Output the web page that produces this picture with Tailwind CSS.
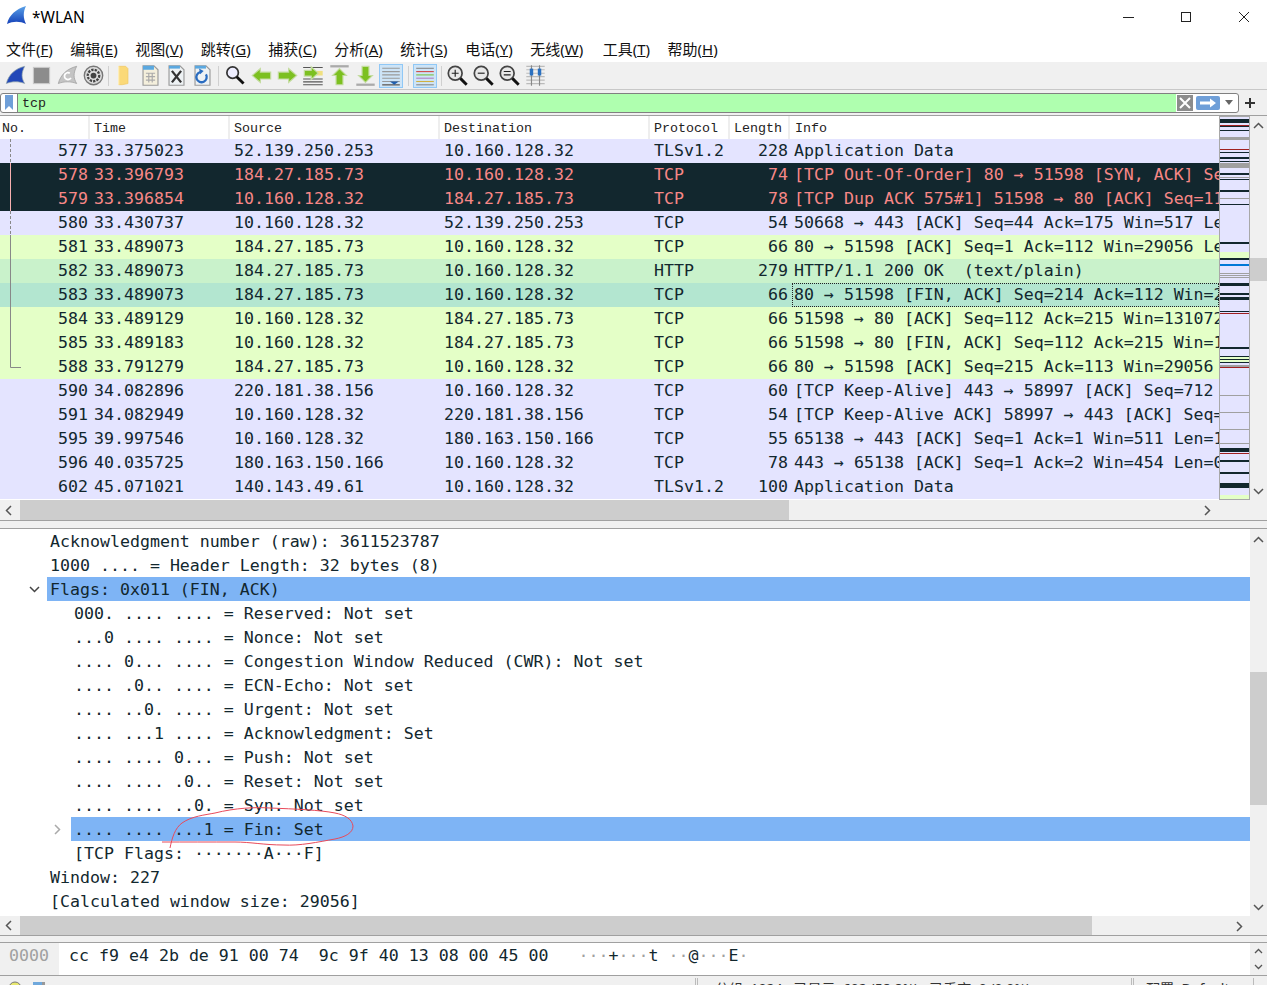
<!DOCTYPE html>
<html lang="zh-CN">
<head>
<meta charset="UTF-8">
<title>*WLAN</title>
<script src="https://cdn.jsdelivr.net/npm/@tailwindcss/browser@4"></script>
</head>
<body class="bg-[#f0f0f0] overflow-hidden">
<div class="relative w-[1267px] h-[985px] overflow-hidden flex flex-col text-black font-['Noto_Sans','Noto_Sans_CJK_SC',sans-serif]">

  <!-- title bar -->
  <div class="h-[34px] bg-white flex items-center pl-[6px]">
    <svg width="22" height="22" viewBox="0 0 22 22" class="mt-[-2px]">
      <defs><linearGradient id="fin" x1="0" y1="0" x2="0" y2="1"><stop offset="0" stop-color="#5aa2e8"/><stop offset="1" stop-color="#1440b8"/></linearGradient></defs>
      <path d="M1 19C3 10 10 4 20 1C17 7 17 13 20 19C14 16 7 16 1 19Z" fill="url(#fin)"/>
    </svg>
    <span class="ml-[4px] mt-[2px] text-[15.5px]">*WLAN</span>
    <div class="ml-auto flex items-center">
      <svg width="58" height="34" viewBox="0 0 58 34"><path d="M30 17.500H41" stroke="#222"/></svg>
      <svg width="58" height="34" viewBox="0 0 58 34"><rect x="30.500" y="12.500" width="9" height="9" fill="none" stroke="#222"/></svg>
      <svg width="58" height="34" viewBox="0 0 58 34"><path d="M30 12L40 22M40 12L30 22" stroke="#222"/></svg>
    </div>
  </div>

  <!-- menu -->
  <div class="h-[28px] bg-white flex items-center pl-[6px] pt-[2px] text-[15px] gap-[17.5px] text-[#111]">
    <span>文件(<u>F</u>)</span><span>编辑(<u>E</u>)</span><span>视图(<u>V</u>)</span><span>跳转(<u>G</u>)</span><span>捕获(<u>C</u>)</span><span>分析(<u>A</u>)</span><span>统计(<u>S</u>)</span><span>电话(<u>Y</u>)</span><span>无线(<u>W</u>)</span><span class="ml-[2px]">工具(<u>T</u>)</span><span>帮助(<u>H</u>)</span>
  </div>

  <!-- toolbar -->
  <div class="h-[28px] bg-[#f0f0f0] border-b border-[#c8c8c8] flex items-center pl-[2px]">
    <span class="w-[26px] h-[24px] flex items-center justify-center"><svg width="23" height="23" viewBox="0 0 20 20"><path d="M2 17C4 9 10 4 18 2C15 8 15 12 18 17C13 15 7 15 2 17Z" fill="#2248b8" stroke="#9aa" stroke-width=".6"/></svg></span>
    <span class="w-[26px] h-[24px] flex items-center justify-center"><svg width="23" height="23" viewBox="0 0 20 20"><rect x="3" y="3" width="14" height="14" fill="#8c8c8c" stroke="#c8c8c8"/></svg></span>
    <span class="w-[26px] h-[24px] flex items-center justify-center"><svg width="23" height="23" viewBox="0 0 20 20"><path d="M2 17C4 9 10 4 18 2C15 8 15 12 18 17C13 15 7 15 2 17Z" fill="#c4c4c4" stroke="#999" stroke-width=".6"/><path d="M12 8A3 3 0 1 0 13 12" fill="none" stroke="#fff" stroke-width="1.500"/></svg></span>
    <span class="w-[26px] h-[24px] flex items-center justify-center"><svg width="23" height="23" viewBox="0 0 20 20"><circle cx="10" cy="10" r="8" fill="#ddd" stroke="#777" stroke-width="1.200"/><circle cx="10" cy="10" r="5" fill="none" stroke="#444" stroke-width="2" stroke-dasharray="2 1"/><circle cx="10" cy="10" r="2.500" fill="#444"/></svg></span>
    <span class="w-px h-[20px] bg-[#d0d0d0] mx-[2px]"></span>
    <span class="w-[26px] h-[24px] flex items-center justify-center"><svg width="23" height="23" viewBox="0 0 20 20"><path d="M5 2H11L13 4V17L8 18H5Z" fill="#fbd978" stroke="#f0c860" stroke-width=".6"/><path d="M5 2V18" stroke="#fff2c0"/></svg></span>
    <span class="w-[26px] h-[24px] flex items-center justify-center"><svg width="23" height="23" viewBox="0 0 20 20"><path d="M3.500 1.500H13L16.500 5V18.500H3.500Z" fill="#f4efdc" stroke="#9a9a9a"/><path d="M3.500 1.500H13V5H3.500Z" fill="#5aa8e0"/><path d="M6 8H14M6 11H14M6 14H14M8.500 8V16M11.500 8V16" stroke="#aaa"/></svg></span>
    <span class="w-[26px] h-[24px] flex items-center justify-center"><svg width="23" height="23" viewBox="0 0 20 20"><path d="M3.500 1.500H13L16.500 5V18.500H3.500Z" fill="#eef2f4" stroke="#9a9a9a"/><path d="M3.500 1.500H13V4H3.500Z" fill="#5aa8e0"/><path d="M6 6L14 16M14 6L6 16" stroke="#333" stroke-width="2"/></svg></span>
    <span class="w-[26px] h-[24px] flex items-center justify-center"><svg width="23" height="23" viewBox="0 0 20 20"><path d="M3.500 1.500H13L16.500 5V18.500H3.500Z" fill="#eef2f4" stroke="#9a9a9a"/><path d="M3.500 1.500H13V4H3.500Z" fill="#5aa8e0"/><path d="M8 7A4.500 4.500 0 1 0 13 9" fill="none" stroke="#2a6cc0" stroke-width="2"/><path d="M7 4L11 6L8 9Z" fill="#2a6cc0"/></svg></span>
    <span class="w-px h-[20px] bg-[#d0d0d0] mx-[3px]"></span>
    <span class="w-[26px] h-[24px] flex items-center justify-center"><svg width="23" height="23" viewBox="0 0 20 20"><circle cx="7.500" cy="7.500" r="5" fill="#eef" stroke="#333" stroke-width="1.500"/><path d="M11 11L17 17" stroke="#111" stroke-width="2.500"/></svg></span>
    <span class="w-[26px] h-[24px] flex items-center justify-center"><svg width="23" height="23" viewBox="0 0 20 20"><path d="M2 10L9 4V7H18V13H9V16Z" fill="#7cc020" stroke="#c4dca0"/></svg></span>
    <span class="w-[26px] h-[24px] flex items-center justify-center"><svg width="23" height="23" viewBox="0 0 20 20"><path d="M18 10L11 4V7H2V13H11V16Z" fill="#7cc020" stroke="#c4dca0"/></svg></span>
    <span class="w-[26px] h-[24px] flex items-center justify-center"><svg width="23" height="23" viewBox="0 0 20 20"><path d="M1 3H18M1 13H18M1 15.500H18M1 18H18" stroke="#555"/><rect x="10" y="6" width="8" height="4" fill="#f0e080"/><path d="M14 8L8 2.500V5.500H2V10.500H8V13.500Z" fill="#7cc020" stroke="#c4dca0"/></svg></span>
    <span class="w-[26px] h-[24px] flex items-center justify-center"><svg width="23" height="23" viewBox="0 0 20 20"><path d="M2 2H18" stroke="#aaa" stroke-width="2"/><path d="M10 4L16 10H13V18H7V10H4Z" fill="#7cc020" stroke="#c4dca0"/></svg></span>
    <span class="w-[26px] h-[24px] flex items-center justify-center"><svg width="23" height="23" viewBox="0 0 20 20"><path d="M2 18H18" stroke="#aaa" stroke-width="2"/><path d="M10 16L16 10H13V2H7V10H4Z" fill="#7cc020" stroke="#c4dca0"/></svg></span>
    <span class="w-[24px] h-[24px] flex items-center justify-center bg-[#cde4f7] border border-[#90c8f6] mx-[1px]"><svg width="22" height="22" viewBox="0 0 20 20"><path d="M2 3H18M2 6H18M2 9H18M2 12H18M2 15H18" stroke="#999"/><path d="M2 18H18" stroke="#777" stroke-width="1.500"/><path d="M9 15H17L13 18Z" fill="#1f5fb0"/></svg></span>
    <span class="w-px h-[20px] bg-[#d0d0d0] mx-[3.500px]"></span>
    <span class="w-[24px] h-[24px] flex items-center justify-center bg-[#cde4f7] border border-[#90c8f6] mx-[1px]"><svg width="22" height="22" viewBox="0 0 20 20"><path d="M2 3H18" stroke="#888"/><path d="M2 6H18" stroke="#d04848"/><path d="M2 9H18" stroke="#7cc040"/><path d="M2 12H18" stroke="#b080c0"/><path d="M2 15H18" stroke="#d0b040"/><path d="M2 18H18" stroke="#888"/></svg></span>
    <span class="w-px h-[20px] bg-[#d0d0d0] mx-[2.500px]"></span>
    <span class="w-[26px] h-[24px] flex items-center justify-center"><svg width="23" height="23" viewBox="0 0 20 20"><circle cx="8" cy="8" r="6" fill="#e8e8e8" stroke="#444" stroke-width="1.500"/><path d="M12.500 12.500L18 18" stroke="#111" stroke-width="2.500"/><path d="M5 8H11M8 5V11" stroke="#222"/></svg></span>
    <span class="w-[26px] h-[24px] flex items-center justify-center"><svg width="23" height="23" viewBox="0 0 20 20"><circle cx="8" cy="8" r="6" fill="#e8e8e8" stroke="#444" stroke-width="1.500"/><path d="M12.500 12.500L18 18" stroke="#111" stroke-width="2.500"/><path d="M5 8H11" stroke="#222"/></svg></span>
    <span class="w-[26px] h-[24px] flex items-center justify-center"><svg width="23" height="23" viewBox="0 0 20 20"><circle cx="8" cy="8" r="6" fill="#e8e8e8" stroke="#444" stroke-width="1.500"/><path d="M12.500 12.500L18 18" stroke="#111" stroke-width="2.500"/><path d="M5 6.500H11M5 9.500H11" stroke="#222"/></svg></span>
    <span class="w-[26px] h-[24px] flex items-center justify-center"><svg width="23" height="23" viewBox="0 0 20 20"><path d="M2 2H18M2 5H18M2 8H18M2 11H18M2 14H18M2 17H18" stroke="#bbb"/><path d="M6.500 1V19M13.500 1V19" stroke="#888"/><rect x="5" y="4" width="3" height="6" fill="#2a70c0"/><rect x="12" y="4" width="3" height="6" fill="#2a70c0"/></svg></span>
  </div>

  <!-- display filter -->
  <div class="h-[26px] flex items-center border-b border-[#a0a0a0] bg-[#f0f0f0]">
    <div class="w-[1239px] h-[20px] flex items-center border border-[#808080] rounded-[3px] bg-white overflow-hidden">
      <span class="w-[17px] h-full flex items-center justify-center border-r border-[#808080]"><svg width="10" height="15" viewBox="0 0 10 15"><path d="M1 0H9V15L5 11L1 15Z" fill="#6f9fd8"/></svg></span>
      <div class="flex-1 h-full bg-[#afffaf] pl-[4px] pt-[2px] flex items-center font-['Liberation_Mono',monospace] text-[13.33px] text-[#222]">tcp</div>
      <span class="w-[16px] h-[16px] bg-[#8c8c8c] flex items-center justify-center ml-[1px]"><svg width="12" height="12" viewBox="0 0 12 12"><path d="M1 1L11 11M11 1L1 11" stroke="#fff" stroke-width="2"/></svg></span>
      <span class="w-[24px] h-[14px] bg-[#6f9fd8] rounded-[2px] flex items-center justify-center ml-[3px]"><svg width="18" height="10" viewBox="0 0 18 10"><path d="M1 3.500H11V0.500L17 5L11 9.500V6.500H1Z" fill="#fff"/></svg></span>
      <span class="w-[18px] flex justify-center"><svg width="8" height="5" viewBox="0 0 8 5"><path d="M0 0H8L4 5Z" fill="#666"/></svg></span>
    </div>
    <span class="w-[21px] flex justify-center"><svg width="10" height="10" viewBox="0 0 10 10"><path d="M5 0V10M0 5H10" stroke="#333" stroke-width="2"/></svg></span>
  </div>

  <!-- packet list -->
  <div class="flex h-[384px] bg-white">
    <div class="w-[1219px] overflow-hidden relative">
      <div class="h-[23px] flex items-center font-['Liberation_Mono',monospace] text-[13.33px] text-[#222] bg-white [&>span]:pt-[2px]">
        <span class="w-[90px] pl-[2px] h-full flex items-center border-r-2 border-[#eeeeee]">No.</span>
        <span class="w-[140px] pl-[4px] h-full flex items-center border-r-2 border-[#eeeeee]">Time</span>
        <span class="w-[210px] pl-[4px] h-full flex items-center border-r-2 border-[#eeeeee]">Source</span>
        <span class="w-[210px] pl-[4px] h-full flex items-center border-r-2 border-[#eeeeee]">Destination</span>
        <span class="w-[80px] pl-[4px] h-full flex items-center border-r-2 border-[#eeeeee]">Protocol</span>
        <span class="w-[60px] pl-[4px] h-full flex items-center border-r-2 border-[#eeeeee]">Length</span>
        <span class="pl-[5px] h-full flex items-center">Info</span>
      </div>
      <div class="font-['DejaVu_Sans_Mono',monospace] text-[16.6px] *:whitespace-pre [&_span]:shrink-0">
        <div class="h-6 flex items-center bg-[#e4e4ff] text-[#12272e]"><span class="w-[88px] text-right">577</span><span class="w-[142px] pl-[6px]">33.375023</span><span class="w-[210px] pl-[4px]">52.139.250.253</span><span class="w-[210px] pl-[4px]">10.160.128.32</span><span class="w-[80px] pl-[4px]">TLSv1.2</span><span class="w-[58px] text-right">228</span><span class="pl-[6px]">Application Data</span></div>
        <div class="h-6 flex items-center bg-[#12272e] text-[#f78787]"><span class="w-[88px] text-right">578</span><span class="w-[142px] pl-[6px]">33.396793</span><span class="w-[210px] pl-[4px]">184.27.185.73</span><span class="w-[210px] pl-[4px]">10.160.128.32</span><span class="w-[80px] pl-[4px]">TCP</span><span class="w-[58px] text-right">74</span><span class="pl-[6px]">[TCP Out-Of-Order] 80 → 51598 [SYN, ACK] Seq=0 Ack=1</span></div>
        <div class="h-6 flex items-center bg-[#12272e] text-[#f78787]"><span class="w-[88px] text-right">579</span><span class="w-[142px] pl-[6px]">33.396854</span><span class="w-[210px] pl-[4px]">10.160.128.32</span><span class="w-[210px] pl-[4px]">184.27.185.73</span><span class="w-[80px] pl-[4px]">TCP</span><span class="w-[58px] text-right">78</span><span class="pl-[6px]">[TCP Dup ACK 575#1] 51598 → 80 [ACK] Seq=112 Ack=1</span></div>
        <div class="h-6 flex items-center bg-[#e4e4ff] text-[#12272e]"><span class="w-[88px] text-right">580</span><span class="w-[142px] pl-[6px]">33.430737</span><span class="w-[210px] pl-[4px]">10.160.128.32</span><span class="w-[210px] pl-[4px]">52.139.250.253</span><span class="w-[80px] pl-[4px]">TCP</span><span class="w-[58px] text-right">54</span><span class="pl-[6px]">50668 → 443 [ACK] Seq=44 Ack=175 Win=517 Len=0</span></div>
        <div class="h-6 flex items-center bg-[#e4ffc7] text-[#12272e]"><span class="w-[88px] text-right">581</span><span class="w-[142px] pl-[6px]">33.489073</span><span class="w-[210px] pl-[4px]">184.27.185.73</span><span class="w-[210px] pl-[4px]">10.160.128.32</span><span class="w-[80px] pl-[4px]">TCP</span><span class="w-[58px] text-right">66</span><span class="pl-[6px]">80 → 51598 [ACK] Seq=1 Ack=112 Win=29056 Len=0</span></div>
        <div class="h-6 flex items-center bg-[#c9f2cb] text-[#12272e]"><span class="w-[88px] text-right">582</span><span class="w-[142px] pl-[6px]">33.489073</span><span class="w-[210px] pl-[4px]">184.27.185.73</span><span class="w-[210px] pl-[4px]">10.160.128.32</span><span class="w-[80px] pl-[4px]">HTTP</span><span class="w-[58px] text-right">279</span><span class="pl-[6px]">HTTP/1.1 200 OK  (text/plain)</span></div>
        <div class="h-6 flex items-center bg-[#b3e6d0] text-[#12272e] relative"><span class="w-[88px] text-right">583</span><span class="w-[142px] pl-[6px]">33.489073</span><span class="w-[210px] pl-[4px]">184.27.185.73</span><span class="w-[210px] pl-[4px]">10.160.128.32</span><span class="w-[80px] pl-[4px]">TCP</span><span class="w-[58px] text-right">66</span><span class="pl-[6px]">80 → 51598 [FIN, ACK] Seq=214 Ack=112 Win=29056 Len=0</span><span class="absolute left-[792px] right-0 top-0 bottom-0 border border-dotted border-[#222]"></span></div>
        <div class="h-6 flex items-center bg-[#e4ffc7] text-[#12272e]"><span class="w-[88px] text-right">584</span><span class="w-[142px] pl-[6px]">33.489129</span><span class="w-[210px] pl-[4px]">10.160.128.32</span><span class="w-[210px] pl-[4px]">184.27.185.73</span><span class="w-[80px] pl-[4px]">TCP</span><span class="w-[58px] text-right">66</span><span class="pl-[6px]">51598 → 80 [ACK] Seq=112 Ack=215 Win=131072 Len=0</span></div>
        <div class="h-6 flex items-center bg-[#e4ffc7] text-[#12272e]"><span class="w-[88px] text-right">585</span><span class="w-[142px] pl-[6px]">33.489183</span><span class="w-[210px] pl-[4px]">10.160.128.32</span><span class="w-[210px] pl-[4px]">184.27.185.73</span><span class="w-[80px] pl-[4px]">TCP</span><span class="w-[58px] text-right">66</span><span class="pl-[6px]">51598 → 80 [FIN, ACK] Seq=112 Ack=215 Win=131072 Len=0</span></div>
        <div class="h-6 flex items-center bg-[#e4ffc7] text-[#12272e]"><span class="w-[88px] text-right">588</span><span class="w-[142px] pl-[6px]">33.791279</span><span class="w-[210px] pl-[4px]">184.27.185.73</span><span class="w-[210px] pl-[4px]">10.160.128.32</span><span class="w-[80px] pl-[4px]">TCP</span><span class="w-[58px] text-right">66</span><span class="pl-[6px]">80 → 51598 [ACK] Seq=215 Ack=113 Win=29056 Len=0</span></div>
        <div class="h-6 flex items-center bg-[#e4e4ff] text-[#12272e]"><span class="w-[88px] text-right">590</span><span class="w-[142px] pl-[6px]">34.082896</span><span class="w-[210px] pl-[4px]">220.181.38.156</span><span class="w-[210px] pl-[4px]">10.160.128.32</span><span class="w-[80px] pl-[4px]">TCP</span><span class="w-[58px] text-right">60</span><span class="pl-[6px]">[TCP Keep-Alive] 443 → 58997 [ACK] Seq=712 Ack=1</span></div>
        <div class="h-6 flex items-center bg-[#e4e4ff] text-[#12272e]"><span class="w-[88px] text-right">591</span><span class="w-[142px] pl-[6px]">34.082949</span><span class="w-[210px] pl-[4px]">10.160.128.32</span><span class="w-[210px] pl-[4px]">220.181.38.156</span><span class="w-[80px] pl-[4px]">TCP</span><span class="w-[58px] text-right">54</span><span class="pl-[6px]">[TCP Keep-Alive ACK] 58997 → 443 [ACK] Seq=1 Ack=713</span></div>
        <div class="h-6 flex items-center bg-[#e4e4ff] text-[#12272e]"><span class="w-[88px] text-right">595</span><span class="w-[142px] pl-[6px]">39.997546</span><span class="w-[210px] pl-[4px]">10.160.128.32</span><span class="w-[210px] pl-[4px]">180.163.150.166</span><span class="w-[80px] pl-[4px]">TCP</span><span class="w-[58px] text-right">55</span><span class="pl-[6px]">65138 → 443 [ACK] Seq=1 Ack=1 Win=511 Len=1</span></div>
        <div class="h-6 flex items-center bg-[#e4e4ff] text-[#12272e]"><span class="w-[88px] text-right">596</span><span class="w-[142px] pl-[6px]">40.035725</span><span class="w-[210px] pl-[4px]">180.163.150.166</span><span class="w-[210px] pl-[4px]">10.160.128.32</span><span class="w-[80px] pl-[4px]">TCP</span><span class="w-[58px] text-right">78</span><span class="pl-[6px]">443 → 65138 [ACK] Seq=1 Ack=2 Win=454 Len=0</span></div>
        <div class="h-6 flex items-center bg-[#e4e4ff] text-[#12272e]"><span class="w-[88px] text-right">602</span><span class="w-[142px] pl-[6px]">45.071021</span><span class="w-[210px] pl-[4px]">140.143.49.61</span><span class="w-[210px] pl-[4px]">10.160.128.32</span><span class="w-[80px] pl-[4px]">TLSv1.2</span><span class="w-[58px] text-right">100</span><span class="pl-[6px]">Application Data</span></div>
      </div>
      <!-- conversation tree marks -->
      <svg class="absolute left-0 top-[23px]" width="24" height="240" viewBox="0 0 24 240">
        <path d="M10.500 0V24" stroke="#888" stroke-dasharray="3 2"/>
        <path d="M10.500 24V72" stroke="#f7b0b0"/>
        <path d="M10.500 72V96" stroke="#888" stroke-dasharray="3 2"/>
        <path d="M10.500 96V228.500H21" stroke="#888" fill="none"/>
      </svg>
    </div>
    <!-- packet minimap -->
    <svg class="shrink-0" width="31" height="384" viewBox="0 0 31 384">
      <rect x=".5" y=".5" width="30" height="383" fill="#e4e4ff" stroke="#a8a8a8"/>
      <g fill="#12272e">
        <rect x="1" y="3" width="29" height="4"/><rect x="1" y="10" width="29" height="1"/><rect x="1" y="14" width="29" height="1"/><rect x="1" y="36" width="29" height="1"/><rect x="1" y="41" width="29" height="2"/><rect x="1" y="45" width="29" height="1"/><rect x="1" y="57" width="29" height="2"/><rect x="1" y="63" width="29" height="1"/><rect x="1" y="74" width="29" height="2"/><rect x="1" y="88" width="29" height="1"/><rect x="1" y="126" width="29" height="2"/><rect x="1" y="142" width="29" height="2"/><rect x="1" y="167" width="29" height="3"/><rect x="1" y="177" width="29" height="2"/><rect x="1" y="181" width="29" height="3"/><rect x="1" y="195" width="29" height="1"/><rect x="1" y="231" width="29" height="2"/><rect x="1" y="240" width="29" height="1"/><rect x="1" y="243" width="29" height="1"/><rect x="1" y="246" width="29" height="1"/><rect x="1" y="332" width="29" height="4"/><rect x="1" y="344" width="29" height="2"/><rect x="1" y="356" width="29" height="2"/><rect x="1" y="367" width="29" height="5"/>
      </g>
      <g fill="#a0a0a0">
        <rect x="1" y="21" width="29" height="3"/><rect x="1" y="47" width="29" height="5"/><rect x="1" y="61" width="29" height="1"/><rect x="1" y="82" width="29" height="1"/><rect x="1" y="157" width="29" height="1"/><rect x="1" y="159" width="29" height="1"/><rect x="1" y="161" width="29" height="1"/><rect x="1" y="249" width="29" height="2"/><rect x="1" y="279" width="29" height="1"/><rect x="1" y="296" width="29" height="1"/><rect x="1" y="313" width="29" height="1"/><rect x="1" y="327" width="29" height="1"/>
      </g>
      <g fill="#a02020">
        <rect x="1" y="9" width="29" height="1"/><rect x="1" y="33" width="29" height="1"/><rect x="1" y="197" width="29" height="1"/><rect x="1" y="251" width="29" height="1"/><rect x="1" y="337" width="29" height="1"/>
      </g>
      <g fill="#e4ffc7">
        <rect x="1" y="136" width="29" height="6"/><rect x="1" y="241" width="29" height="2"/><rect x="1" y="244" width="29" height="2"/><rect x="1" y="379" width="29" height="4"/>
      </g>
      <rect x="1" y="148" width="29" height="2" fill="#0078d7"/>
    </svg>
    <!-- list v-scroll -->
    <div class="w-[17px] bg-[#f0f0f0] flex flex-col items-center relative">
      <svg class="mt-[6px]" width="11" height="7" viewBox="0 0 11 7"><path d="M1 6L5.500 1.500L10 6" fill="none" stroke="#555" stroke-width="1.500"/></svg>
      <div class="absolute left-0 right-0 top-[142px] h-[23px] bg-[#cdcdcd]"></div>
      <svg class="mt-auto mb-[5px]" width="11" height="7" viewBox="0 0 11 7"><path d="M1 1L5.500 5.500L10 1" fill="none" stroke="#555" stroke-width="1.500"/></svg>
    </div>
  </div>
  <!-- list h-scroll -->
  <div class="h-[20px] bg-[#f0f0f0] flex items-center relative">
    <svg class="ml-[5px]" width="7" height="11" viewBox="0 0 7 11"><path d="M6 1L1.500 5.500L6 10" fill="none" stroke="#555" stroke-width="1.500"/></svg>
    <div class="absolute left-[20px] top-0 bottom-0 w-[769px] bg-[#cdcdcd]"></div>
    <svg class="absolute left-[1204px] top-[5px]" width="7" height="11" viewBox="0 0 7 11"><path d="M1 1L5.500 5.500L1 10" fill="none" stroke="#555" stroke-width="1.500"/></svg>
  </div>
  <div class="h-[9px] bg-[#f0f0f0] border-t border-b border-[#a0a0a0]"></div>

  <!-- packet details -->
  <div class="flex h-[387px] bg-white relative">
    <div class="w-[1250px] font-['DejaVu_Sans_Mono',monospace] text-[16.6px] *:whitespace-pre *:pt-[2px] text-[#12272e]">
      <div class="h-6 flex items-center pl-[50px]">Acknowledgment number (raw): 3611523787</div>
      <div class="h-6 flex items-center pl-[50px]">1000 .... = Header Length: 32 bytes (8)</div>
      <div class="h-6 flex items-center ml-[47px] pl-[3px] bg-[#7eb4f5] relative"><svg class="absolute left-[-18px] top-[9px]" width="11" height="7" viewBox="0 0 11 7"><path d="M1 1L5.500 5.500L10 1" fill="none" stroke="#444" stroke-width="1.500"/></svg>Flags: 0x011 (FIN, ACK)</div>
      <div class="h-6 flex items-center pl-[74px]">000. .... .... = Reserved: Not set</div>
      <div class="h-6 flex items-center pl-[74px]">...0 .... .... = Nonce: Not set</div>
      <div class="h-6 flex items-center pl-[74px]">.... 0... .... = Congestion Window Reduced (CWR): Not set</div>
      <div class="h-6 flex items-center pl-[74px]">.... .0.. .... = ECN-Echo: Not set</div>
      <div class="h-6 flex items-center pl-[74px]">.... ..0. .... = Urgent: Not set</div>
      <div class="h-6 flex items-center pl-[74px]">.... ...1 .... = Acknowledgment: Set</div>
      <div class="h-6 flex items-center pl-[74px]">.... .... 0... = Push: Not set</div>
      <div class="h-6 flex items-center pl-[74px]">.... .... .0.. = Reset: Not set</div>
      <div class="h-6 flex items-center pl-[74px]">.... .... ..0. = Syn: Not set</div>
      <div class="h-6 flex items-center relative ml-[71px] pl-[3px] bg-[#7eb4f5]"><svg class="absolute left-[-17px] top-[7px]" width="7" height="11" viewBox="0 0 7 11"><path d="M1 1L5.500 5.500L1 10" fill="none" stroke="#aaa" stroke-width="1.500"/></svg>.... .... ...1 = Fin: Set</div>
      <div class="h-6 flex items-center pl-[74px]">[TCP Flags: ·······A···F]</div>
      <div class="h-6 flex items-center pl-[50px]">Window: 227</div>
      <div class="h-6 flex items-center pl-[50px]">[Calculated window size: 29056]</div>
    </div>
    <div class="w-[17px] bg-[#f0f0f0] flex flex-col items-center relative">
      <svg class="mt-[7px]" width="11" height="7" viewBox="0 0 11 7"><path d="M1 6L5.500 1.500L10 6" fill="none" stroke="#555" stroke-width="1.500"/></svg>
      <div class="absolute left-0 right-0 top-[143px] h-[133px] bg-[#cdcdcd]"></div>
      <svg class="mt-auto mb-[5px]" width="11" height="7" viewBox="0 0 11 7"><path d="M1 1L5.500 5.500L10 1" fill="none" stroke="#555" stroke-width="1.500"/></svg>
    </div>
    <!-- red pen annotation over the Fin row -->
    <svg class="absolute left-0 top-0 pointer-events-none" width="400" height="340" viewBox="0 529 400 340">
      <path d="M170 848C172 838 175 828 182 823C192 816 205 815 215 813C235 808 255 807 270 808C295 809 320 810 335 813C345 815 352 819 353 826C353 833 345 837 335 839C318 842 300 846 283 845C265 845 250 842 235 842C210 842 185 842 162 842" fill="none" stroke="#e84a5a" stroke-width="1"/>
    </svg>
  </div>
  <!-- details h-scroll -->
  <div class="h-[20px] bg-[#f0f0f0] flex items-center relative border-b border-[#a0a0a0] shrink-0">
    <svg class="ml-[5px]" width="7" height="11" viewBox="0 0 7 11"><path d="M6 1L1.500 5.500L6 10" fill="none" stroke="#555" stroke-width="1.500"/></svg>
    <div class="absolute left-[20px] top-0 bottom-0 w-[1072px] bg-[#cdcdcd]"></div>
    <svg class="absolute left-[1236px] top-[5px]" width="7" height="11" viewBox="0 0 7 11"><path d="M1 1L5.500 5.500L1 10" fill="none" stroke="#555" stroke-width="1.500"/></svg>
  </div>
  <div class="h-[7px] bg-[#f0f0f0] border-b border-[#a0a0a0] shrink-0"></div>

  <!-- hex dump -->
  <div class="h-[33px] flex bg-white border-b border-[#a0a0a0] shrink-0 font-['DejaVu_Sans_Mono',monospace] text-[16.6px] *:whitespace-pre">
    <div class="w-[59px] bg-[#f0f0f0] text-[#a0a0a0] pl-[9px] pt-[1px]">0000</div>
    <div class="pl-[10px] pt-[1px] text-[#12272e]">cc f9 e4 2b de 91 00 74  9c 9f 40 13 08 00 45 00</div>
    <div class="pl-[30px] pt-[1px] text-[#12272e]"><span class="text-[#a0a0a0]">···</span>+<span class="text-[#a0a0a0]">···</span>t <span class="text-[#a0a0a0]">··</span>@<span class="text-[#a0a0a0]">···</span>E<span class="text-[#a0a0a0]">·</span></div>
    <div class="ml-auto w-[17px] bg-[#f0f0f0] flex flex-col items-center justify-center gap-[10px]">
      <svg width="9" height="6" viewBox="0 0 9 6"><path d="M1 5L4.500 1.500L8 5" fill="none" stroke="#555" stroke-width="1.300"/></svg>
      <svg width="9" height="6" viewBox="0 0 9 6"><path d="M1 1L4.500 4.500L8 1" fill="none" stroke="#555" stroke-width="1.300"/></svg>
    </div>
  </div>

  <!-- status bar, cut off by the window edge -->
  <div class="h-[9px] bg-[#f0f0f0] overflow-hidden relative text-[14px] text-[#333] leading-[20px]">
    <svg class="absolute left-[8px] top-[5px]" width="14" height="14" viewBox="0 0 14 14"><circle cx="7" cy="7" r="6" fill="#e8e870" stroke="#777"/></svg>
    <svg class="absolute left-[32px] top-[5px]" width="14" height="14" viewBox="0 0 14 14"><rect x="1" y="1" width="9" height="12" fill="#6fa8dc"/><rect x="10" y="1" width="3" height="3" fill="#999"/></svg>
    <span class="absolute left-[695px] top-[2px] h-full w-[3px] border-x border-[#bbb]"></span>
    <span class="absolute left-[715px] top-[3px] whitespace-nowrap">分组: 1024 · 已显示: 602 (58.8%) · 已丢弃: 0 (0.0%)</span>
    <span class="absolute left-[1131px] top-[2px] h-full w-[3px] border-x border-[#bbb]"></span>
    <span class="absolute left-[1146px] top-[3px] whitespace-nowrap">配置: Default</span>
    <span class="absolute left-[1253px] top-[2px] h-full w-px bg-[#bbb]"></span>
  </div>
</div>
</body>
</html>
